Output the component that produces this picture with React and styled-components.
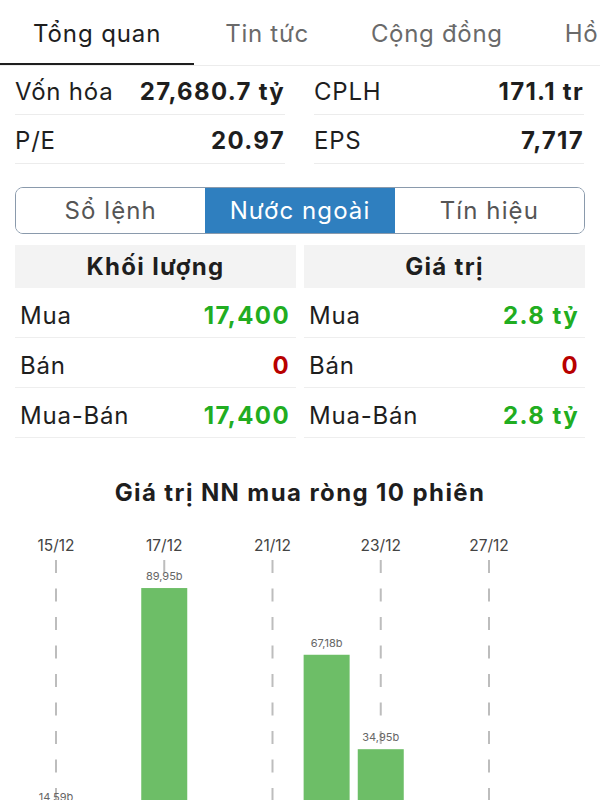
import React from 'react';
import styled, { createGlobalStyle } from 'styled-components';

const GlobalStyle = createGlobalStyle`
  html, body {
    margin: 0;
    padding: 0;
    background: #fff;
  }
  body {
    width: 600px;
    height: 800px;
    overflow: hidden;
    font-family: Inter, "Noto Sans", sans-serif;
    color: #222;
  }
`;

const tabs = ['Tổng quan', 'Tin tức', 'Cộng đồng', 'Hồ sơ'];

const stats = [
  [['Vốn hóa', '27,680.7 tỷ'], ['CPLH', '171.1 tr']],
  [['P/E', '20.97'], ['EPS', '7,717']],
];

const segments = ['Sổ lệnh', 'Nước ngoài', 'Tín hiệu'];

const foreign = [
  {
    title: 'Khối lượng',
    rows: [
      ['Mua', '17,400', 'up'],
      ['Bán', '0', 'down'],
      ['Mua-Bán', '17,400', 'up'],
    ],
  },
  {
    title: 'Giá trị',
    rows: [
      ['Mua', '2.8 tỷ', 'up'],
      ['Bán', '0', 'down'],
      ['Mua-Bán', '2.8 tỷ', 'up'],
    ],
  },
];

const dates = ['15/12', '17/12', '21/12', '23/12', '27/12'];
const sessions = [14.59, null, 89.95, null, null, 67.18, 34.95, null, null, null];

function NetChart() {
  const left = 56;
  const step = 54.125;
  const base = 321.6;
  const scale = 2.93;
  return (
    <ChartSvg width="600" height="270" viewBox="0 0 600 270">
      {dates.map((d, i) => {
        const x = left + step * 2 * i;
        return (
          <g key={d}>
            <DateLabel x={x} y="21" textAnchor="middle">{d}</DateLabel>
            <line x1={x} y1="30" x2={x} y2="270" stroke="#bdbdbd" strokeWidth="2" strokeDasharray="13 15.5" />
          </g>
        );
      })}
      {sessions.map((v, i) => {
        if (v == null) return null;
        const cx = left + step * i;
        const top = base - v * scale;
        return (
          <rect key={'b' + i} x={cx - 23} y={top} width="46" height={v * scale} fill="#6dbe67" />
        );
      })}
      {sessions.map((v, i) => {
        if (v == null) return null;
        const cx = left + step * i;
        const top = base - v * scale;
        return (
          <ValueLabel key={'l' + i} x={cx} y={top - 8} textAnchor="middle">
            {v.toFixed(2).replace('.', ',')}b
          </ValueLabel>
        );
      })}
    </ChartSvg>
  );
}

export default function App() {
  return (
    <Page>
      <GlobalStyle />
      <TabBar>
        {tabs.map((t, i) => (
          <Tab key={t} active={i === 0}>{t}</Tab>
        ))}
      </TabBar>

      <StatsGrid>
        {stats.map((row) =>
          row.map(([label, value]) => (
            <StatRow key={label}>
              <StatLabel>{label}</StatLabel>
              <StatValue>{value}</StatValue>
            </StatRow>
          ))
        )}
      </StatsGrid>

      <Segmented>
        {segments.map((s, i) => (
          <Segment key={s} active={i === 1}>{s}</Segment>
        ))}
      </Segmented>

      <ForeignGrid>
        {foreign.map((col) => (
          <Column key={col.title}>
            <ColumnHeader>{col.title}</ColumnHeader>
            {col.rows.map(([label, value, dir]) => (
              <DataRow key={label}>
                <DataLabel>{label}</DataLabel>
                <DataValue dir={dir}>{value}</DataValue>
              </DataRow>
            ))}
          </Column>
        ))}
      </ForeignGrid>

      <ChartTitle>Giá trị NN mua ròng 10 phiên</ChartTitle>
      <NetChart />
    </Page>
  );
}

const Page = styled.div`
  width: 600px;
  height: 800px;
  overflow: hidden;
`;

const TabBar = styled.div`
  display: flex;
  height: 66px;
  border-bottom: 1px solid #ececec;
  box-sizing: border-box;
  white-space: nowrap;
  overflow: hidden;
`;

const Tab = styled.div`
  flex: none;
  padding: 3px ${(p) => (p.active ? '33px' : '31px')} 0;
  height: 66px;
  box-sizing: border-box;
  display: flex;
  align-items: center;
  font-size: 24px;
  letter-spacing: ${(p) => (p.active ? '0.9px' : '0.7px')};
  color: ${(p) => (p.active ? '#1e1e1e' : '#6a6a6a')};
  border-bottom: 3px solid ${(p) => (p.active ? '#1e1e1e' : 'transparent')};
`;

const StatsGrid = styled.div`
  display: grid;
  grid-template-columns: 270px 270px;
  column-gap: 29px;
  padding: 0 15px;
`;

const StatRow = styled.div`
  display: flex;
  align-items: center;
  justify-content: space-between;
  height: 46px;
  padding-top: 2px;
  border-bottom: 1px solid #ececec;
`;

const StatLabel = styled.span`
  font-size: 24px;
  letter-spacing: 0.8px;
  color: #1e1e1e;
`;

const StatValue = styled.span`
  font-size: 24px;
  letter-spacing: 1.3px;
  font-weight: 700;
  color: #1e1e1e;
`;

const Segmented = styled.div`
  display: grid;
  grid-template-columns: repeat(3, 1fr);
  margin: 23px 15px 0;
  height: 47px;
  border: 1.5px solid #8a9aac;
  border-radius: 8px;
  overflow: hidden;
  box-sizing: border-box;
`;

const Segment = styled.div`
  display: flex;
  align-items: center;
  justify-content: center;
  font-size: 24px;
  letter-spacing: 1.1px;
  color: ${(p) => (p.active ? '#fff' : '#555')};
  background: ${(p) => (p.active ? '#2f7fbf' : '#fff')};
`;

const ForeignGrid = styled.div`
  display: grid;
  grid-template-columns: 1fr 1fr;
  column-gap: 8px;
  padding: 0 15px;
  margin-top: 11px;
`;

const Column = styled.div`
  display: flex;
  flex-direction: column;
`;

const ColumnHeader = styled.div`
  height: 43px;
  background: #f3f3f3;
  display: flex;
  align-items: center;
  justify-content: center;
  font-size: 24px;
  letter-spacing: 1.3px;
  font-weight: 700;
  color: #1e1e1e;
`;

const DataRow = styled.div`
  display: flex;
  align-items: center;
  justify-content: space-between;
  height: 43px;
  padding: 6px 6px 0 5px;
  border-bottom: 1px solid #eeeeee;
  &:first-of-type {
    height: 45px;
  }
`;

const DataLabel = styled.span`
  font-size: 24px;
  letter-spacing: 0.8px;
  color: #1e1e1e;
`;

const DataValue = styled.span`
  font-size: 24px;
  letter-spacing: 1.4px;
  font-weight: 700;
  color: ${(p) => (p.dir === 'down' ? '#b80000' : '#21ad21')};
`;

const ChartTitle = styled.div`
  margin-top: 40px;
  text-align: center;
  font-size: 24px;
  letter-spacing: 1.4px;
  font-weight: 700;
  color: #1e1e1e;
  height: 30px;
  line-height: 30px;
`;

const ChartSvg = styled.svg`
  display: block;
  margin-top: 22px;
`;

const DateLabel = styled.text`
  font-family: Inter, "Noto Sans", sans-serif;
  font-size: 15.5px;
  fill: #444;
`;

const ValueLabel = styled.text`
  font-family: Inter, "Noto Sans", sans-serif;
  font-size: 11px;
  fill: #666;
`;
